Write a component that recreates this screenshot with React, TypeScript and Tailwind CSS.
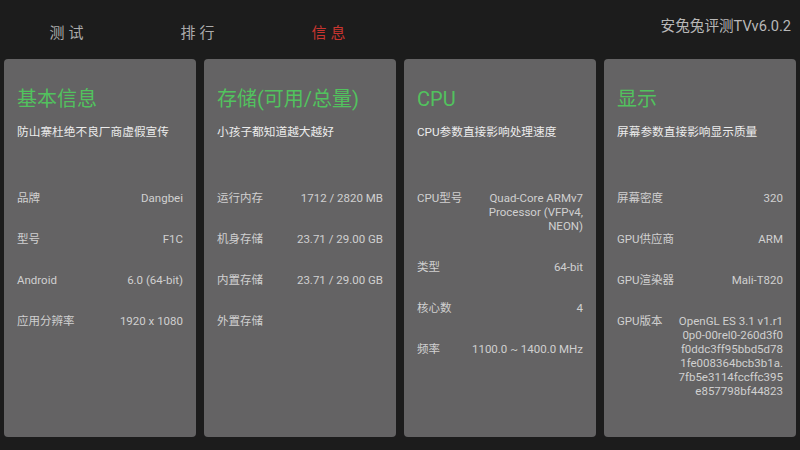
import React from "react";

const font = { fontFamily: "Roboto, 'Noto Sans CJK SC', sans-serif" };

type Row = { label: string; value: React.ReactNode };

function Card({ title, sub, rows }: { title: string; sub: string; rows: Row[] }) {
  return (
    <div className="w-[192px] h-[378px] bg-[#646364] rounded-[4px] px-[13px] flex flex-col">
      <div className="text-[20px] leading-[24px] text-[#52c25e] mt-[28px]">{title}</div>
      <div className="text-[11.7px] leading-[14px] text-[#ececec] mt-[14px]">{sub}</div>
      <div className="flex flex-col gap-[27px] mt-[52px]">
        {rows.map((r, i) => (
          <div key={i} className="flex justify-between items-start text-[11.5px] leading-[14px] text-[#d0d0d0]">
            <span className="whitespace-nowrap">{r.label}</span>
            <span className="text-right">{r.value}</span>
          </div>
        ))}
      </div>
    </div>
  );
}

export default function App() {
  return (
    <div className="w-[800px] h-[450px] bg-[#1c1c1c] overflow-hidden" style={font}>
      <div className="h-[59px] flex items-start justify-between">
        <div className="flex pl-[1px] pt-[24px]">
          <div className="w-[131px] pl-[4px] text-center text-[15px] leading-[18px] tracking-[4px] text-[#ababab]">测试</div>
          <div className="w-[131px] pl-[4px] text-center text-[15px] leading-[18px] tracking-[4px] text-[#ababab]">排行</div>
          <div className="w-[131px] pl-[4px] text-center text-[15px] leading-[18px] tracking-[4px] text-[#c8352f]">信息</div>
        </div>
        <div className="pt-[17px] pr-[9px] text-[14.6px] leading-[18px] text-[#b8b8b8]">安兔兔评测TVv6.0.2</div>
      </div>
      <div className="flex gap-[8px] px-[4px]">
        <Card
          title="基本信息"
          sub="防山寨杜绝不良厂商虚假宣传"
          rows={[
            { label: "品牌", value: "Dangbei" },
            { label: "型号", value: "F1C" },
            { label: "Android", value: "6.0 (64-bit)" },
            { label: "应用分辨率", value: "1920 x 1080" },
          ]}
        />
        <Card
          title="存储(可用/总量)"
          sub="小孩子都知道越大越好"
          rows={[
            { label: "运行内存", value: "1712 / 2820 MB" },
            { label: "机身存储", value: "23.71 / 29.00 GB" },
            { label: "内置存储", value: "23.71 / 29.00 GB" },
            { label: "外置存储", value: "" },
          ]}
        />
        <Card
          title="CPU"
          sub="CPU参数直接影响处理速度"
          rows={[
            {
              label: "CPU型号",
              value: (
                <>
                  Quad-Core ARMv7
                  <br />
                  Processor (VFPv4,
                  <br />
                  NEON)
                </>
              ),
            },
            { label: "类型", value: "64-bit" },
            { label: "核心数", value: "4" },
            { label: "频率", value: "1100.0 ~ 1400.0 MHz" },
          ]}
        />
        <Card
          title="显示"
          sub="屏幕参数直接影响显示质量"
          rows={[
            { label: "屏幕密度", value: "320" },
            { label: "GPU供应商", value: "ARM" },
            { label: "GPU渲染器", value: "Mali-T820" },
            {
              label: "GPU版本",
              value: (
                <>
                  OpenGL ES 3.1 v1.r1
                  <br />
                  0p0-00rel0-260d3f0
                  <br />
                  f0ddc3ff95bbd5d78
                  <br />
                  1fe008364bcb3b1a.
                  <br />
                  7fb5e3114fccffc395
                  <br />
                  e857798bf44823
                </>
              ),
            },
          ]}
        />
      </div>
    </div>
  );
}
